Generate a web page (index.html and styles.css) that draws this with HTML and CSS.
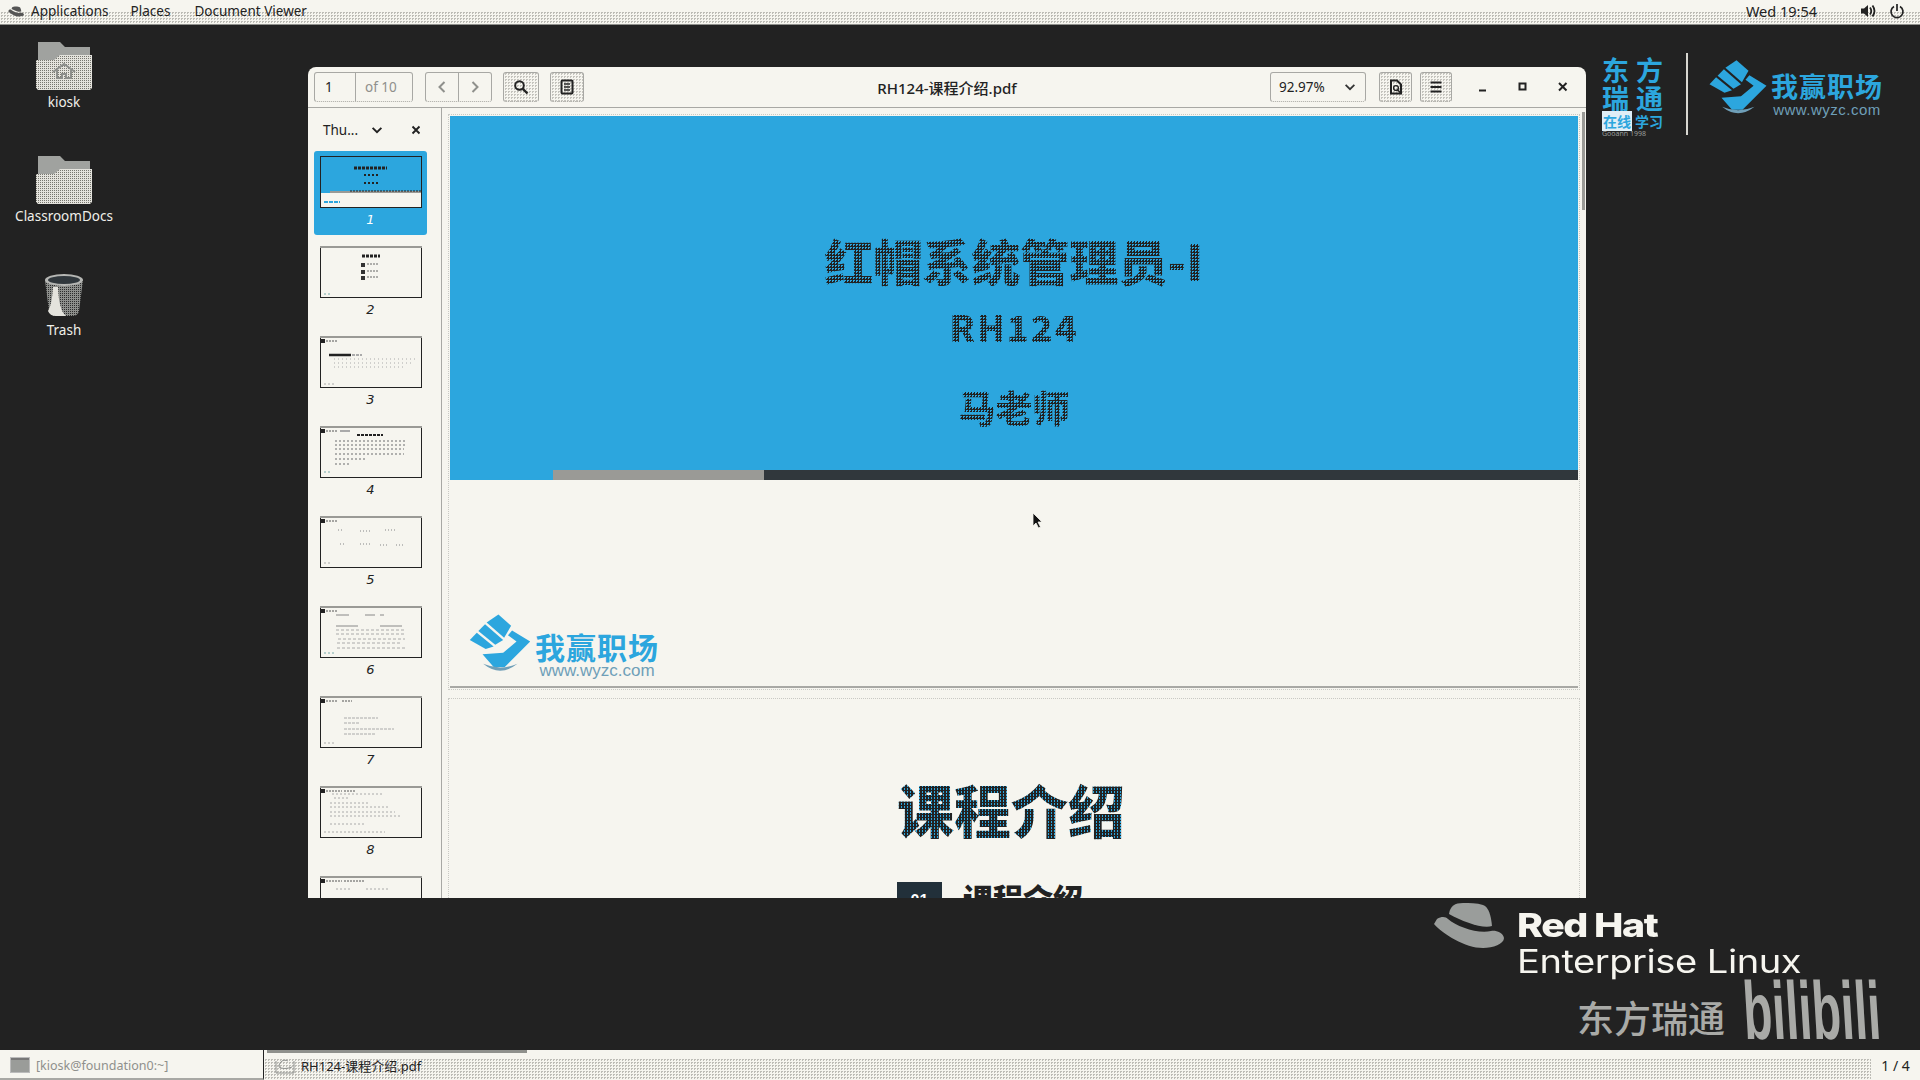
FILE: index.html
```html
<!DOCTYPE html>
<html lang="en">
<head>
<meta charset="utf-8">
<title>RH124</title>
<link rel="stylesheet" href="styles.css">
</head>
<body>
<svg class="defs" width="0" height="0" aria-hidden="true">
  <defs>
    <pattern id="dots" width="2" height="2" patternUnits="userSpaceOnUse">
      <rect width="2" height="2" fill="#e4e3dd"/><rect width="1" height="1" fill="#77776f"/>
    </pattern>
    <pattern id="dotsdark" width="2" height="2" patternUnits="userSpaceOnUse">
      <rect width="2" height="2" fill="#8d8f8c"/><rect width="1" height="1" fill="#2c2c2c"/>
    </pattern>
    <symbol id="fist" viewBox="80 65 200 195">
      <polygon points="85,150 107,127 160,170 135,178" fill="#2ca6de"/>
      <polygon points="112,122 133,100 190,150 165,165" fill="#2ca6de"/>
      <polygon points="138,95 175,70 215,105 193,143" fill="#2ca6de"/>
      <polygon points="218,120 275,155 195,235 160,235 125,195 190,190 232,155 205,135" fill="#2ca6de"/>
      <path d="M127 225 Q180 268 235 225 Q180 248 127 225 Z" fill="#6f9fb8"/>
    </symbol>
    <symbol id="folder" viewBox="0 0 56 48">
      <path d="M2 0H24L29 5H54V18H2Z" fill="#a0a29f"/>
      <path d="M0 18H18L24 13H56V46L54 48H2L0 46Z" fill="url(#dots)"/>
    </symbol>
  </defs>
</svg>

<header class="topbar">
  <svg class="top-hat" viewBox="0 0 71 47"><path d="M16 12C17 4 22 1 30 1C36 1 44 1 50 3C56 5 58 14 59 24C50 27 30 20 16 12Z" fill="#555"/><path d="M4 17C9 14 13 15 15 17C24 25 45 32 58 29C62 28 70 30 71 36C71 42 60 46 50 46C32 46 10 32 1 22Z" fill="#555"/></svg>
  <span class="top-item top-first">Applications</span>
  <span class="top-item top-places">Places</span>
  <span class="top-item">Document Viewer</span>
  <span class="top-clock">Wed 19:54</span>
  <svg class="top-vol" viewBox="0 0 16 16"><path d="M1 5.5H4L8 2V14L4 10.5H1Z" fill="#222"/><path d="M10 4.5Q12.5 8 10 11.5M12.5 2.5Q16.5 8 12.5 13.5" fill="none" stroke="#222" stroke-width="1.8"/></svg>
  <svg class="top-power" viewBox="0 0 16 16"><path d="M5 3.5A6 6 0 1 0 11 3.5" fill="none" stroke="#222" stroke-width="1.7"/><path d="M8 1V8" stroke="#222" stroke-width="1.7"/></svg>
</header>

<main class="desktop">
  <nav class="desk-icons">
    <div class="desk-item">
      <svg class="folder-icon" viewBox="0 0 56 48"><use href="#folder"/><path d="M17 30L28 22L39 30M21 28V36H26V32H30V36H35V28" fill="none" stroke="#8d8f8c" stroke-width="2"/></svg>
      <span class="desk-label">kiosk</span>
    </div>
    <div class="desk-item">
      <svg class="folder-icon" viewBox="0 0 56 48"><use href="#folder"/></svg>
      <span class="desk-label">ClassroomDocs</span>
    </div>
    <div class="desk-item desk-trash">
      <svg class="trash-icon" viewBox="0 0 40 44"><path d="M1 7L5 38Q6 43 12 43H28Q34 43 35 38L39 7Z" fill="url(#dotsdark)"/><path d="M9 14Q8 32 4 38Q6 43 12 43H22Q15 38 14 14Z" fill="#e4e3dd"/><ellipse cx="20" cy="7" rx="19" ry="6" fill="#b5b6b3"/><ellipse cx="20" cy="7" rx="16" ry="4" fill="#30373c"/></svg>
      <span class="desk-label">Trash</span>
    </div>
  </nav>

  <section class="window">
    <div class="headerbar">
      <div class="hb-left">
        <div class="btn pagebox"><span class="page-cur">1</span><span class="page-of">of 10</span></div>
        <div class="btn navbox">
          <span class="nav-cell"><svg class="ico" viewBox="0 0 16 16"><path d="M10.5 3L5.5 8L10.5 13" fill="none" stroke="#8f908c" stroke-width="2"/></svg></span>
          <span class="nav-cell nav-second"><svg class="ico" viewBox="0 0 16 16"><path d="M5.5 3L10.5 8L5.5 13" fill="none" stroke="#8f908c" stroke-width="2"/></svg></span>
        </div>
        <div class="btn iconbtn search-btn"><svg class="ico" viewBox="0 0 16 16"><circle cx="6.5" cy="6.5" r="4.3" fill="none" stroke="#222" stroke-width="2"/><path d="M9.8 9.8L14.5 14.5" stroke="#222" stroke-width="2.4"/></svg></div>
        <div class="btn iconbtn side-btn"><svg class="ico" viewBox="0 0 16 16"><rect x="2.5" y="1.5" width="11" height="13" rx="1" fill="none" stroke="#222" stroke-width="2"/><path d="M5 5H11M5 8H11M5 11H11" stroke="#222" stroke-width="1.3"/></svg></div>
      </div>
      <div class="hb-title">RH124-课程介绍.pdf</div>
      <div class="hb-right">
        <div class="btn zoombox"><span class="zoom-val">92.97%</span><svg class="ico-sm" viewBox="0 0 16 16"><path d="M3 5.5L8 10.5L13 5.5" fill="none" stroke="#333" stroke-width="2"/></svg></div>
        <div class="btn iconbtn book-btn"><svg class="ico" viewBox="0 0 16 16"><path d="M3 1.5H9L13 5.5V14.5H3Z" fill="none" stroke="#222" stroke-width="2"/><circle cx="8" cy="9" r="2.4" fill="none" stroke="#222" stroke-width="1.4"/><path d="M9.5 10.5L12 13.5" stroke="#222" stroke-width="1.6"/></svg></div>
        <div class="btn iconbtn menu-btn"><svg class="ico" viewBox="0 0 16 16"><path d="M2.5 3.5H13.5M2.5 8H13.5M2.5 12.5H13.5" stroke="#222" stroke-width="1.8"/></svg></div>
        <div class="wm">
          <svg class="wm-ico" viewBox="0 0 12 12"><path d="M2 9.5H9" stroke="#222" stroke-width="2"/></svg>
          <svg class="wm-ico" viewBox="0 0 12 12"><rect x="2.5" y="2.5" width="6" height="6" fill="none" stroke="#222" stroke-width="2"/></svg>
          <svg class="wm-ico" viewBox="0 0 12 12"><path d="M2 2L9.5 9.5M9.5 2L2 9.5" stroke="#222" stroke-width="2"/></svg>
        </div>
      </div>
    </div>

    <div class="win-body">
      <aside class="sidebar">
        <div class="side-head">
          <span class="side-name">Thu...</span>
          <svg class="ico-sm side-chev" viewBox="0 0 16 16"><path d="M3 5.5L8 10.5L13 5.5" fill="none" stroke="#222" stroke-width="2.2"/></svg>
          <svg class="ico-sm side-close" viewBox="0 0 16 16"><path d="M4 4L12 12M12 4L4 12" stroke="#222" stroke-width="2.2"/></svg>
        </div>
        <div class="thumbs">
          <div class="thumb-item thumb-selected">
            <svg class="thumb" viewBox="0 0 102 52"><rect width="102" height="52" fill="#f6f5ef"/><rect width="102" height="37" fill="#2ca6de"/><rect x="10" y="35" width="92" height="2" fill="#9a9a96"/><path d="M30 35H102" stroke="#222" stroke-dasharray="2 1"/><path d="M34 12H67" stroke="#222" stroke-width="3" stroke-dasharray="3 1"/><path d="M44 19H58M44 27H58" stroke="#222" stroke-width="2" stroke-dasharray="2 2"/><path d="M4 46H20" stroke="#2ca6de" stroke-width="2" stroke-dasharray="4 1"/><rect x=".5" y=".5" width="101" height="51" fill="none" stroke="#222"/></svg>
            <span class="thumb-num">1</span>
          </div>
          <div class="thumb-item">
            <svg class="thumb" viewBox="0 0 102 52"><rect width="102" height="52" fill="#f6f5ef"/><path d="M42 10H60" stroke="#222" stroke-width="3" stroke-dasharray="3 1"/><rect x="41" y="17" width="4" height="4" fill="#333"/><rect x="41" y="24" width="4" height="4" fill="#333"/><rect x="41" y="30" width="4" height="4" fill="#333"/><path d="M47 18H58M47 25H58M47 31H58" stroke="#666" stroke-dasharray="2 1"/><path d="M4 48H10" stroke="#7aa" stroke-dasharray="2 2"/><rect x=".5" y=".5" width="101" height="51" fill="none" stroke="#222"/><rect width="102" height="2" fill="#9a9a96"/></svg>
            <span class="thumb-num">2</span>
          </div>
          <div class="thumb-item">
            <svg class="thumb" viewBox="0 0 102 52"><rect width="102" height="52" fill="#f6f5ef"/><rect x="1" y="3" width="4" height="4" fill="#222"/><path d="M6 5H18" stroke="#555" stroke-dasharray="2 1"/><path d="M9 19H31" stroke="#222" stroke-width="2.5"/><path d="M32 19H42" stroke="#aaa" stroke-width="2" stroke-dasharray="3 1"/><path d="M14 23H95M14 27H92M14 31H84" stroke="#aaa" stroke-dasharray="1 3"/><path d="M4 48H14" stroke="#aaa" stroke-dasharray="2 2"/><rect x=".5" y=".5" width="101" height="51" fill="none" stroke="#222"/><rect width="102" height="2" fill="#9a9a96"/></svg>
            <span class="thumb-num">3</span>
          </div>
          <div class="thumb-item">
            <svg class="thumb" viewBox="0 0 102 52"><rect width="102" height="52" fill="#f6f5ef"/><rect x="1" y="3" width="4" height="4" fill="#222"/><path d="M6 5H18" stroke="#555" stroke-dasharray="2 1"/><path d="M20 5H30" stroke="#aaa" stroke-width="2"/><path d="M37 9H63" stroke="#222" stroke-width="2" stroke-dasharray="3 1"/><path d="M15 15H87M15 19H87M15 23H84M15 28H84M15 33H45M15 38H30" stroke="#999" stroke-width="1.5" stroke-dasharray="2 2"/><path d="M4 46H12" stroke="#7aa" stroke-dasharray="2 2"/><rect x=".5" y=".5" width="101" height="51" fill="none" stroke="#222"/><rect width="102" height="2" fill="#9a9a96"/></svg>
            <span class="thumb-num">4</span>
          </div>
          <div class="thumb-item">
            <svg class="thumb" viewBox="0 0 102 52"><rect width="102" height="52" fill="#f6f5ef"/><rect x="1" y="3" width="4" height="4" fill="#222"/><path d="M6 5H18" stroke="#555" stroke-dasharray="2 1"/><path d="M18 14H24M40 15H50M65 14H76M20 28H24M40 28H50M60 29H68M76 29H84" stroke="#aaa" stroke-width="1.5" stroke-dasharray="1 2"/><path d="M4 47H12" stroke="#aaa" stroke-dasharray="2 2"/><rect x=".5" y=".5" width="101" height="51" fill="none" stroke="#222"/><rect width="102" height="2" fill="#9a9a96"/></svg>
            <span class="thumb-num">5</span>
          </div>
          <div class="thumb-item">
            <svg class="thumb" viewBox="0 0 102 52"><rect width="102" height="52" fill="#f6f5ef"/><rect x="1" y="3" width="4" height="4" fill="#222"/><path d="M6 5H18" stroke="#555" stroke-dasharray="2 1"/><path d="M16 9H29M45 9H55M60 9H64M16 20H38M60 20H82" stroke="#888"/><path d="M16 24H85M16 28H85M18 33H85M17 37H82M17 42H85" stroke="#aaa" stroke-dasharray="3 2"/><path d="M4 47H14" stroke="#7aa" stroke-dasharray="2 2"/><rect x=".5" y=".5" width="101" height="51" fill="none" stroke="#222"/><rect width="102" height="2" fill="#9a9a96"/></svg>
            <span class="thumb-num">6</span>
          </div>
          <div class="thumb-item">
            <svg class="thumb" viewBox="0 0 102 52"><rect width="102" height="52" fill="#f6f5ef"/><rect x="1" y="3" width="4" height="4" fill="#222"/><path d="M6 5H18M22 5H32" stroke="#555" stroke-dasharray="2 1"/><path d="M24 22H58M24 27H40M24 33H74M24 38H56" stroke="#aaa" stroke-dasharray="3 1"/><path d="M4 47H14" stroke="#aaa" stroke-dasharray="2 2"/><rect x=".5" y=".5" width="101" height="51" fill="none" stroke="#222"/><rect width="102" height="2" fill="#9a9a96"/></svg>
            <span class="thumb-num">7</span>
          </div>
          <div class="thumb-item">
            <svg class="thumb" viewBox="0 0 102 52"><rect width="102" height="52" fill="#f6f5ef"/><rect x="1" y="3" width="4" height="4" fill="#222"/><path d="M6 5H22M24 5H36" stroke="#555" stroke-dasharray="2 1"/><path d="M12 8H64M14 12H30M10 17H50M10 21H70M10 26H75M10 30H82M10 38H45M4 46H65" stroke="#aaa" stroke-dasharray="2 2"/><rect x=".5" y=".5" width="101" height="51" fill="none" stroke="#222"/><rect width="102" height="2" fill="#9a9a96"/></svg>
            <span class="thumb-num">8</span>
          </div>
          <div class="thumb-item">
            <svg class="thumb" viewBox="0 0 102 52"><rect width="102" height="52" fill="#f6f5ef"/><rect x="1" y="3" width="4" height="4" fill="#222"/><path d="M6 5H22M24 5H44" stroke="#555" stroke-dasharray="2 1"/><path d="M16 13H30M46 13H70" stroke="#aaa" stroke-dasharray="2 2"/><rect x=".5" y=".5" width="101" height="51" fill="none" stroke="#222"/><rect width="102" height="2" fill="#9a9a96"/></svg>
          </div>
        </div>
      </aside>

      <div class="view">
        <div class="scrollbar"></div>
        <article class="page page-one">
          <div class="cover">
            <h1 class="cover-title">红帽系统管理员-I</h1>
            <div class="cover-code">RH124</div>
            <div class="cover-teacher">马老师</div>
            <div class="cover-strip"><span class="strip-gap"></span><span class="strip-gray"></span><span class="strip-dark"></span></div>
          </div>
          <div class="cover-foot">
            <svg class="foot-fist"><use href="#fist"/></svg>
            <div class="brand-text">
              <span class="brand-cn">我赢职场</span>
              <span class="brand-url">www.wyzc.com</span>
            </div>
          </div>
        </article>
        <article class="page page-two">
          <h2 class="p2-title">课程介绍</h2>
          <div class="p2-row"><span class="p2-num">01</span><span class="p2-item">课程介绍</span></div>
        </article>
      </div>
    </div>
  </section>

  <svg class="cursor" viewBox="0 0 11 17"><path d="M1 1V14L4 11L6.5 16L8.5 15L6 10H10Z" fill="#111" stroke="#f6f5ef" stroke-width=".8"/></svg>

  <div class="wm-logos">
    <div class="df-logo">
      <span class="df-big">东方</span>
      <span class="df-big">瑞通</span>
      <span class="df-sub"><b class="df-box">在线</b>学习</span>
      <span class="df-tiny">Gooann 1998</span>
    </div>
    <span class="logo-div"></span>
    <svg class="top-fist"><use href="#fist"/></svg>
    <div class="brand-text brand-top">
      <span class="brand-cn">我赢职场</span>
      <span class="brand-url">www.wyzc.com</span>
    </div>
  </div>

  <div class="rh-logo">
    <svg class="rh-hat" viewBox="0 0 71 47"><path d="M16 12C17 4 22 1 30 1C36 1 44 1 50 3C56 5 58 14 59 24C50 27 30 20 16 12Z" fill="#9a9d9b"/><path d="M4 17C9 14 13 15 15 17C24 25 45 32 58 29C62 28 70 30 71 36C71 42 60 46 50 46C32 46 10 32 1 22Z" fill="#9a9d9b"/></svg>
    <div class="rh-text"><b class="rh-red">Red Hat</b><span class="rh-ent">Enterprise Linux</span></div>
  </div>

  <div class="bili-row">
    <span class="bili-cn">东方瑞通</span>
    <span class="bili-logo">bilibili</span>
  </div>
</main>

<footer class="taskbar">
  <div class="task task-off">
    <svg class="task-ico" viewBox="0 0 20 16"><rect x=".5" y=".5" width="19" height="15" fill="#9a9c99" stroke="#bbb"/><rect x="1" y="1" width="18" height="2" fill="#777"/></svg>
    <span>[kiosk@foundation0:~]</span>
  </div>
  <div class="task task-on">
    <svg class="task-ico" viewBox="0 0 20 16"><path d="M1 3V15H19V3" fill="none" stroke="#8d8f8c"/><path d="M4 9C4 3 9 1 13 3M4 9Q9 12 17 9" fill="none" stroke="#8d8f8c"/></svg>
    <span>RH124-课程介绍.pdf</span>
  </div>
  <div class="task-pager">1 / 4</div>
</footer>
</body>
</html>
```
FILE: styles.css
```css
* { box-sizing: border-box; }
html, body { margin: 0; height: 100%; }
body {
  width: 1920px; height: 1080px; overflow: hidden;
  display: flex; flex-direction: column;
  background: #222;
  font-family: "Noto Sans", "Noto Sans CJK SC", sans-serif;
  font-size: 13.5px; color: #222;
}
.defs { position: absolute; }

/* top panel */
.topbar {
  height: 25px; flex: none; display: flex; align-items: center;
  padding: 0 0 2px 8px; border-bottom: 1px solid #8f908c;
  background:
    linear-gradient(#f6f5ef 0 12px, transparent 12px),
    repeating-conic-gradient(#bdbcb6 0 25%, transparent 0 100%) 0 0 / 3px 3px,
    #f6f5ef;
  font-size: 13.5px;
}
.top-hat { width: 16px; height: 11px; flex: none; }
.top-item { margin-right: 22px; }
.top-first { margin-left: 7px; }
.top-places { margin-right: 24px; }
.top-clock { margin-left: auto; margin-right: 43px; font-size: 14.5px; }
.top-vol { width: 16px; height: 16px; margin-right: 13px; }
.top-power { width: 16px; height: 16px; margin-right: 15px; }

/* desktop */
.desktop { flex: 1; position: relative; min-height: 0; }
.desk-icons { display: flex; flex-direction: column; width: 128px; padding-top: 17px; }
.desk-item { height: 114px; display: flex; flex-direction: column; align-items: center; }
.desk-trash { margin-top: 3px; }
.folder-icon { width: 56px; height: 48px; flex: none; }
.trash-icon { width: 40px; height: 44px; flex: none; margin-bottom: 1px; }
.desk-label { color: #f0efe9; font-size: 13.5px; line-height: 18px; margin-top: 3px; }

/* window */
.window {
  position: absolute; left: 308px; top: 42px; width: 1278px; height: 831px;
  background: #f6f5ef; border-radius: 8px 8px 0 0; overflow: hidden;
  display: flex; flex-direction: column;
}
.headerbar {
  height: 41px; flex: none; display: grid; grid-template-columns: 1fr auto 1fr;
  align-items: center; border-bottom: 1px solid #a8a8a4;
  padding: 0 6px;
}
.hb-left { display: flex; gap: 11px; align-items: center; }
.hb-right { display: flex; align-items: center; justify-content: flex-end; }
.hb-title { font-weight: 500; font-size: 15px; }
.btn {
  height: 30px; display: flex; align-items: center;
  border-top: 1px solid #a8a8a4; border-left: 1px solid #a8a8a4; border-right: 1px solid #a8a8a4;
  border-bottom: 1px dotted #a8a8a4; border-radius: 3px;
}
.pagebox { width: 99px; margin-right: 1px; }
.page-cur { width: 41px; padding-left: 10px; border-right: 1px solid #a8a8a4; height: 100%; display: flex; align-items: center; }
.page-of { color: #8f908c; padding-left: 9px; }
.navbox { width: 67px; }
.nav-cell { flex: 1; height: 100%; display: flex; align-items: center; justify-content: center; }
.nav-second { border-left: 1px solid #a8a8a4; }
.iconbtn {
  justify-content: center;
  background: repeating-conic-gradient(#c4c3bd 0 25%, transparent 0 100%) 0 0 / 3px 3px;
}
.search-btn { width: 36px; }
.side-btn { width: 34px; }
.ico { width: 16px; height: 16px; }
.ico-sm { width: 14px; height: 14px; }
.zoombox { width: 96px; padding: 0 8px; justify-content: space-between; margin-right: 13px; }
.book-btn { width: 33px; margin-right: 8px; }
.menu-btn { width: 32px; margin-right: 25px; }
.wm { display: flex; gap: 28px; padding-right: 11px; }
.wm-ico { width: 12px; height: 12px; }

.win-body { flex: 1; display: flex; min-height: 0; }
.sidebar { width: 134px; flex: none; border-right: 1px solid #a8a8a4; overflow: hidden; }
.side-head { height: 43px; display: flex; align-items: center; padding-left: 15px; }
.side-name { width: 47px; }
.side-chev { margin-right: 25px; }
.thumbs { display: flex; flex-direction: column; gap: 6px; padding-left: 6px; }
.thumb-item { width: 113px; height: 84px; padding: 5px 6px 0; display: flex; flex-direction: column; align-items: center; flex: none; }
.thumb-selected { background: #2ca6de; border-radius: 3px; color: #fff; }
.thumb { width: 102px; height: 52px; flex: none; display: block; }
.thumb-num { font: italic 13px/24px "DejaVu Sans", sans-serif; }

.view { flex: 1; position: relative; overflow: hidden; padding: 8px 8px 0; }
.scrollbar { position: absolute; right: 1px; top: 4px; width: 3px; height: 98px; background: #9a9a96; }
.page { width: 1128px; outline: 1px dotted #c9c9c4; outline-offset: 1px; }
.page-one { height: 572px; border-bottom: 2px solid #a8a8a4; margin-bottom: 12px; display: flex; flex-direction: column; }
.cover {
  height: 364px; flex: none; background: #2ca6de; display: flex; flex-direction: column; align-items: center;
  padding-top: 116px;
  font-family: "Noto Sans CJK SC", sans-serif; font-weight: 900;
}
.cover-title, .cover-code, .cover-teacher {
  margin: 0; color: transparent; -webkit-background-clip: text; background-clip: text;
  background-image: repeating-conic-gradient(#2ca6de 0 25%, #222 0 100%);
  background-size: 3px 3px; font-weight: 900;
}
.cover-title { font-size: 49px; line-height: 56px; }
.cover-code { font-size: 36px; line-height: 48px; margin-top: 14px; letter-spacing: 2px; }
.cover-teacher { font-size: 37px; line-height: 48px; margin-top: 33px; }
.cover-strip { margin-top: auto; height: 10px; width: 100%; display: flex; }
.strip-gap { width: 103px; }
.strip-gray { width: 211px; background: #9a9a96; }
.strip-dark { flex: 1; background: #30373c; }
.cover-foot { flex: 1; display: flex; align-items: flex-start; padding: 133px 0 0 18px; gap: 3px; }
.foot-fist { width: 64px; height: 62px; flex: none; }
.brand-text { display: flex; flex-direction: column; align-items: center; padding-top: 18px; }
.brand-cn { color: #2ca6de; font: 700 30px/30px "Noto Sans CJK SC", sans-serif; letter-spacing: 1px; }
.brand-url { color: #6f9fb8; font: 17px/19px "Liberation Sans", sans-serif; }

.page-two { height: 400px; padding: 76px 0 0 447px; font-family: "Noto Sans CJK SC", sans-serif; font-weight: 900; }
.p2-title {
  margin: 0; font-size: 57px; line-height: 64px; font-weight: 900; color: transparent;
  -webkit-background-clip: text; background-clip: text;
  background-image: repeating-conic-gradient(#2ca6de 0 8%, #222 0 100%);
  background-size: 3px 3px; width: 230px;
}
.p2-row { display: flex; align-items: flex-start; gap: 21px; margin-top: 42px; }
.p2-num { width: 45px; height: 40px; background: #22303a; color: #fff; font: 700 16px/16px "Liberation Sans", sans-serif; text-align: center; padding-top: 11px; flex: none; }
.p2-item { font-size: 30px; line-height: 34px; color: #222; margin-top: -2px; }

.cursor { position: absolute; left: 1032px; top: 487px; width: 11px; height: 17px; }

/* watermark logos */
.wm-logos { position: absolute; left: 1600px; top: 28px; display: flex; align-items: flex-start; }
.df-logo { width: 72px; display: flex; flex-direction: column; align-items: flex-start; color: #2ca6de; padding: 3px 0 0 2px; }
.df-big { font: 700 27px/28px "Noto Sans CJK SC", sans-serif; letter-spacing: 7px; white-space: nowrap; }
.df-sub { font: 700 14px/16px "Noto Sans CJK SC", sans-serif; margin-top: 1px; white-space: nowrap; }
.df-box { background: #dfeef6; color: #2ca6de; margin-right: 3px; padding: 0 1px; font-weight: 700; }
.df-tiny { font-size: 7px; line-height: 10px; color: #9a9d9b; white-space: nowrap; }
.logo-div { width: 2px; height: 82px; background: #d8d7d1; margin: 0 20px 0 14px; flex: none; }
.top-fist { width: 60px; height: 64px; flex: none; margin-top: 3px; }
.brand-top { padding-top: 18px; margin-left: 3px; }
.brand-top .brand-cn { font-size: 27px; line-height: 30px; letter-spacing: 1px; }
.brand-top .brand-url { font-size: 15px; line-height: 18px; letter-spacing: .5px; }

.rh-logo { position: absolute; left: 1433px; top: 877px; display: flex; gap: 13px; }
.rh-hat { width: 71px; height: 47px; flex: none; }
.rh-text {
  display: flex; flex-direction: column; color: #f6f5ef; font-family: Inter, sans-serif; padding-top: 4px;
  transform: scaleX(1.19); transform-origin: 0 0; white-space: nowrap;
}
.rh-red { font-size: 33px; line-height: 38px; font-weight: 800; letter-spacing: -1.2px; }
.rh-ent { font-size: 32px; line-height: 36px; font-weight: 400; letter-spacing: -.4px; }

.bili-row { position: absolute; left: 1577px; top: 950px; display: flex; align-items: flex-end; gap: 20px; }
.bili-cn { color: #a9aaa7; font: 500 37px/44px "Noto Sans CJK SC", sans-serif; }
.bili-logo {
  color: #a9aaa7; font: 700 82px/64px "Liberation Sans", sans-serif;
  display: inline-block; width: 140px; transform-origin: 0 100%;
  transform: translateY(4px) scaleX(.58) skewX(6deg); white-space: nowrap;
}

/* taskbar */
.taskbar {
  height: 30px; flex: none; display: flex; align-items: stretch; font-size: 13px;
  background:
    linear-gradient(#f6f5ef 0 8px, transparent 8px),
    repeating-conic-gradient(#bdbcb6 0 25%, transparent 0 100%) 0 0 / 3px 3px,
    #f6f5ef;
}
.task { display: flex; align-items: center; gap: 6px; padding-left: 10px; }
.task-off { width: 264px; color: #8f908c; background: #f6f5ef; border-bottom: 2px solid #a8a8a4; border-right: 1px solid #222; padding-top: 2px; font-size: 12.5px; }
.task-on { width: 260px; margin-left: 3px; border-top: 3px solid #8f908c; padding-left: 8px; padding-bottom: 2px; }
.task-ico { width: 20px; height: 16px; flex: none; }
.task-pager { margin-left: auto; width: 49px; background: #f6f5ef; display: flex; align-items: center; justify-content: center; font-size: 14px; }
```
